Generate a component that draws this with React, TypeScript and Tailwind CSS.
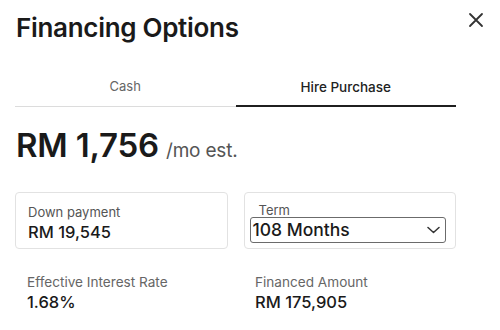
import React from 'react';

const FinancingOptions = () => {
  return (
    <div className="w-[500px] h-[330px] bg-white relative font-['Inter',sans-serif] text-[#1a1a1a] overflow-hidden">
      <button className="absolute right-[16px] top-[12px] text-[#333]">
        <svg width="16" height="16" viewBox="0 0 16 16" fill="none" stroke="currentColor" strokeWidth="1.8" strokeLinecap="round">
          <path d="M2 2L14 14M14 2L2 14" />
        </svg>
      </button>
      <div className="pl-[16px] pt-[12px] pr-[44px]">
        <h2 className="text-[26px] font-semibold tracking-[-0.3px] leading-[32px]">Financing Options</h2>
      </div>
      <div className="mx-[15px] w-[441px] mt-[33px] flex">
        <div className="flex-1 text-center text-[13px] text-[#666] pb-[9px] border-b border-[#dcdcdc]">Cash</div>
        <div className="flex-1 text-center text-[13.5px] font-medium text-[#222] pb-[8px] border-b-2 border-[#1f1f1f]">Hire Purchase</div>
      </div>
      <div className="pl-[16px] mt-[18px] flex items-baseline gap-[7px]">
        <span className="text-[33px] font-semibold leading-[40px] tracking-[-0.2px]">RM 1,756</span>
        <span className="text-[19px] text-[#555] tracking-[-0.2px]">/mo est.</span>
      </div>
      <div className="mx-[15px] w-[441px] mt-[26px] grid grid-cols-2 gap-[16px]">
        <div className="h-[57px] border border-[#e2e2e2] rounded-[4px] pl-[12px] pt-[11px]">
          <div className="text-[13px] text-[#555] leading-[16px]">Down payment</div>
          <div className="text-[16.5px] font-medium leading-[22px] mt-[1px]">RM 19,545</div>
        </div>
        <div className="h-[57px] border border-[#e2e2e2] rounded-[4px] px-[5px] pt-[10px]">
          <div className="text-[13px] text-[#555] leading-[14px] pl-[9px]">Term</div>
          <div className="h-[26px] border-[1.5px] border-[#6b6b6b] rounded-[3px] flex items-center justify-between pl-[2px] pr-[5px] w-[196px]">
            <span className="text-[17.5px] font-medium">108 Months</span>
            <svg width="13" height="8" viewBox="0 0 13 8" fill="none" stroke="#333" strokeWidth="1.5" strokeLinecap="round" strokeLinejoin="round">
              <path d="M1 1.5L6.5 6.5L12 1.5" />
            </svg>
          </div>
        </div>
      </div>
      <div className="mt-[25px] grid grid-cols-[228px_1fr] pl-[27px]">
        <div>
          <div className="text-[13.6px] text-[#666] leading-[16px]">Effective Interest Rate</div>
          <div className="text-[16.5px] font-medium leading-[22px] mt-[1px]">1.68%</div>
        </div>
        <div>
          <div className="text-[13.6px] text-[#666] leading-[16px]">Financed Amount</div>
          <div className="text-[16.5px] font-medium leading-[22px] mt-[1px]">RM 175,905</div>
        </div>
      </div>
    </div>
  );
};

export default FinancingOptions;
